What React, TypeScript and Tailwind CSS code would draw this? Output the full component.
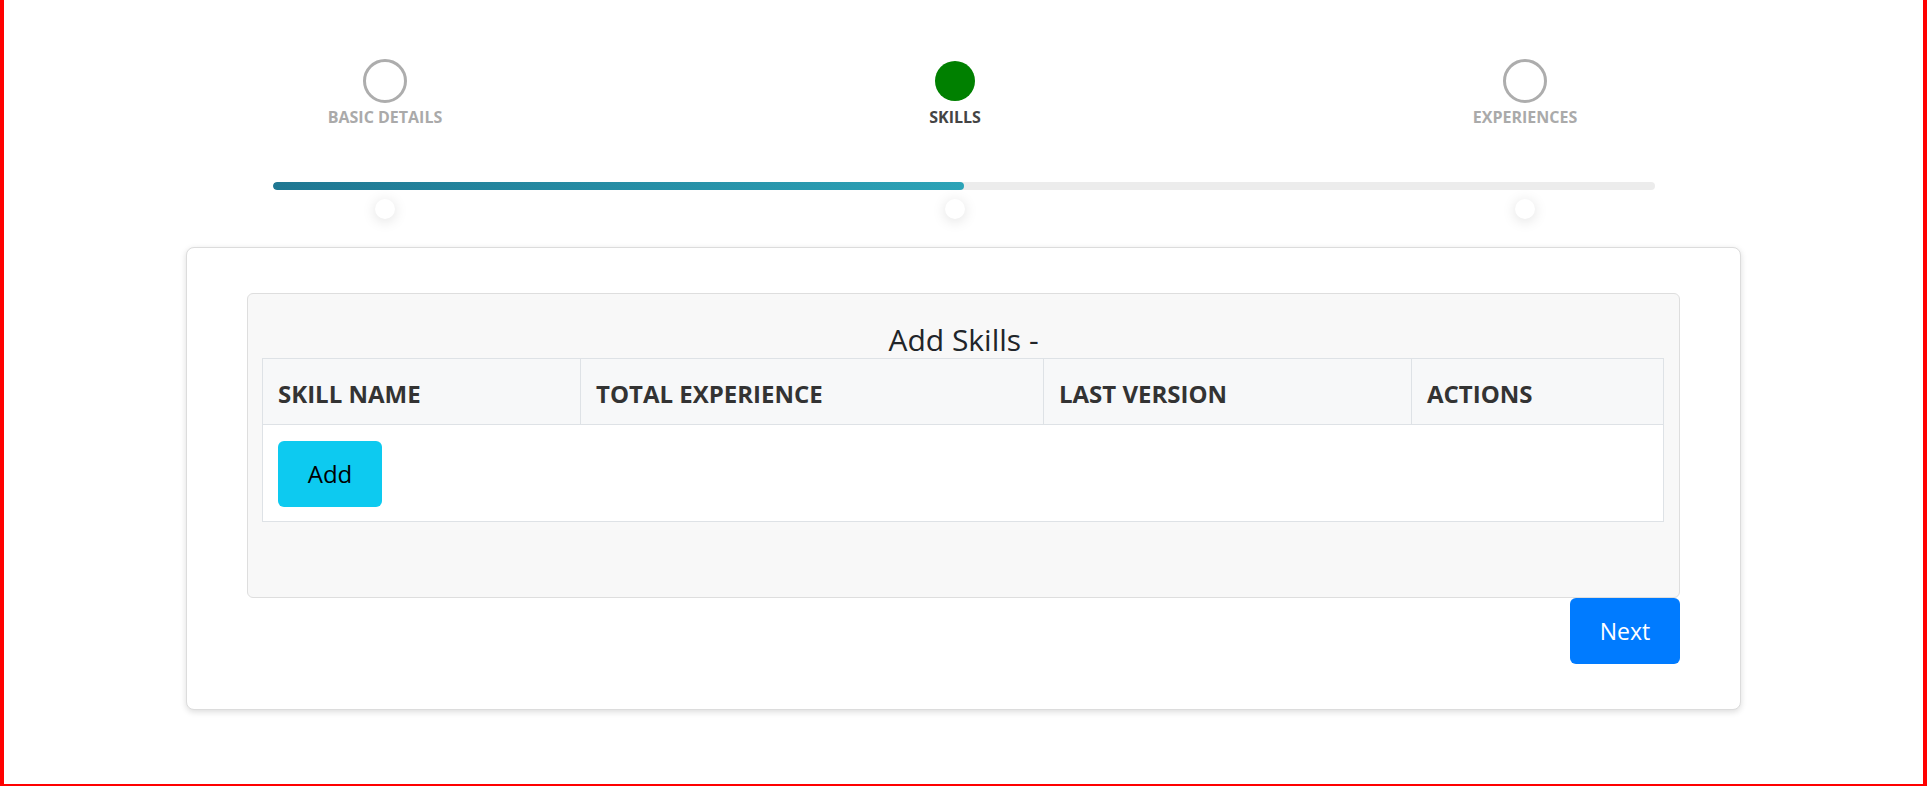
const steps = [
  { label: "BASIC DETAILS", active: false },
  { label: "SKILLS", active: true },
  { label: "EXPERIENCES", active: false },
];

const columns = ["SKILL NAME", "TOTAL EXPERIENCE", "LAST VERSION", "ACTIONS"];

const Stepper = () => {
  return (
    <div>
      <div className="flex pl-[96px]">
        {steps.map((step) => (
          <div key={step.label} className="w-[570px] flex flex-col items-center">
            <div className="h-[44px] flex items-center justify-center">
              {step.active ? (
                <div className="w-10 h-10 rounded-full bg-[#008000]" />
              ) : (
                <div className="w-[44px] h-[44px] rounded-full border-[3px] border-[#adadad]" />
              )}
            </div>
            <span
              className={`mt-[4px] text-[16px] leading-[20px] font-bold ${
                step.active ? "text-[#444]" : "text-[#aaa]"
              }`}
            >
              {step.label}
            </span>
          </div>
        ))}
      </div>

      <div className="mt-[55px] mx-auto w-[1382px] h-2 rounded-full bg-[#ececec] overflow-hidden">
        <div className="h-full w-1/2 rounded-full bg-gradient-to-r from-[#1f7792] to-[#2ca3b7]" />
      </div>

      <div className="flex pl-[96px] mt-[9px]">
        {steps.map((step) => (
          <div key={step.label} className="w-[570px] flex justify-center">
            <div className="w-5 h-5 rounded-full bg-white shadow-[0_2px_14px_rgba(0,0,0,0.13)]" />
          </div>
        ))}
      </div>
    </div>
  );
};

const SkillsTable = () => {
  return (
    <div className="pl-[14px] pr-[15px]">
      <div className="grid grid-cols-[317px_463px_368px_252px] border border-[#dee2e6] bg-[#f7f8f9]">
        {columns.map((col, i) => (
          <div
            key={col}
            className={`px-[15px] pt-[17px] pb-[12px] text-[24px] leading-[36px] font-bold text-[#333] ${
              i > 0 ? "border-l border-[#dee2e6]" : ""
            }`}
          >
            {col}
          </div>
        ))}
      </div>
      <div className="border-x border-b border-[#dee2e6] bg-white px-[15px] pt-[16px] pb-[14px]">
        <button className="w-[104px] h-[66px] rounded-md bg-[#0dcaf0] text-black text-[24px] leading-[36px] flex items-center justify-center">
          Add
        </button>
      </div>
    </div>
  );
};

export default function App() {
  return (
    <div
      className="w-full h-[786px] bg-white border-x-4 border-b-2 border-[#ff0000] pt-[59px] overflow-hidden"
      style={{ fontFamily: '"Open Sans", "Noto Sans", sans-serif' }}
    >
      <Stepper />

      <div className="mt-[28px] mx-auto w-[1555px] bg-white border border-[#dcdcdc] rounded-lg shadow-[0_2px_6px_rgba(0,0,0,0.14)] px-[60px] pt-[45px] pb-[45px]">
        <div className="bg-[#f8f8f8] border border-[#dedede] rounded-md pt-[28px] pb-[75px]">
          <h2 className="text-center text-[30px] leading-[36px] text-[#212529]">Add Skills -</h2>
          <SkillsTable />
        </div>
        <div className="flex justify-end">
          <button className="w-[110px] h-[66px] rounded-md bg-[#007bff] text-white text-[23px] leading-[36px] flex items-center justify-center">
            Next
          </button>
        </div>
      </div>
    </div>
  );
}
